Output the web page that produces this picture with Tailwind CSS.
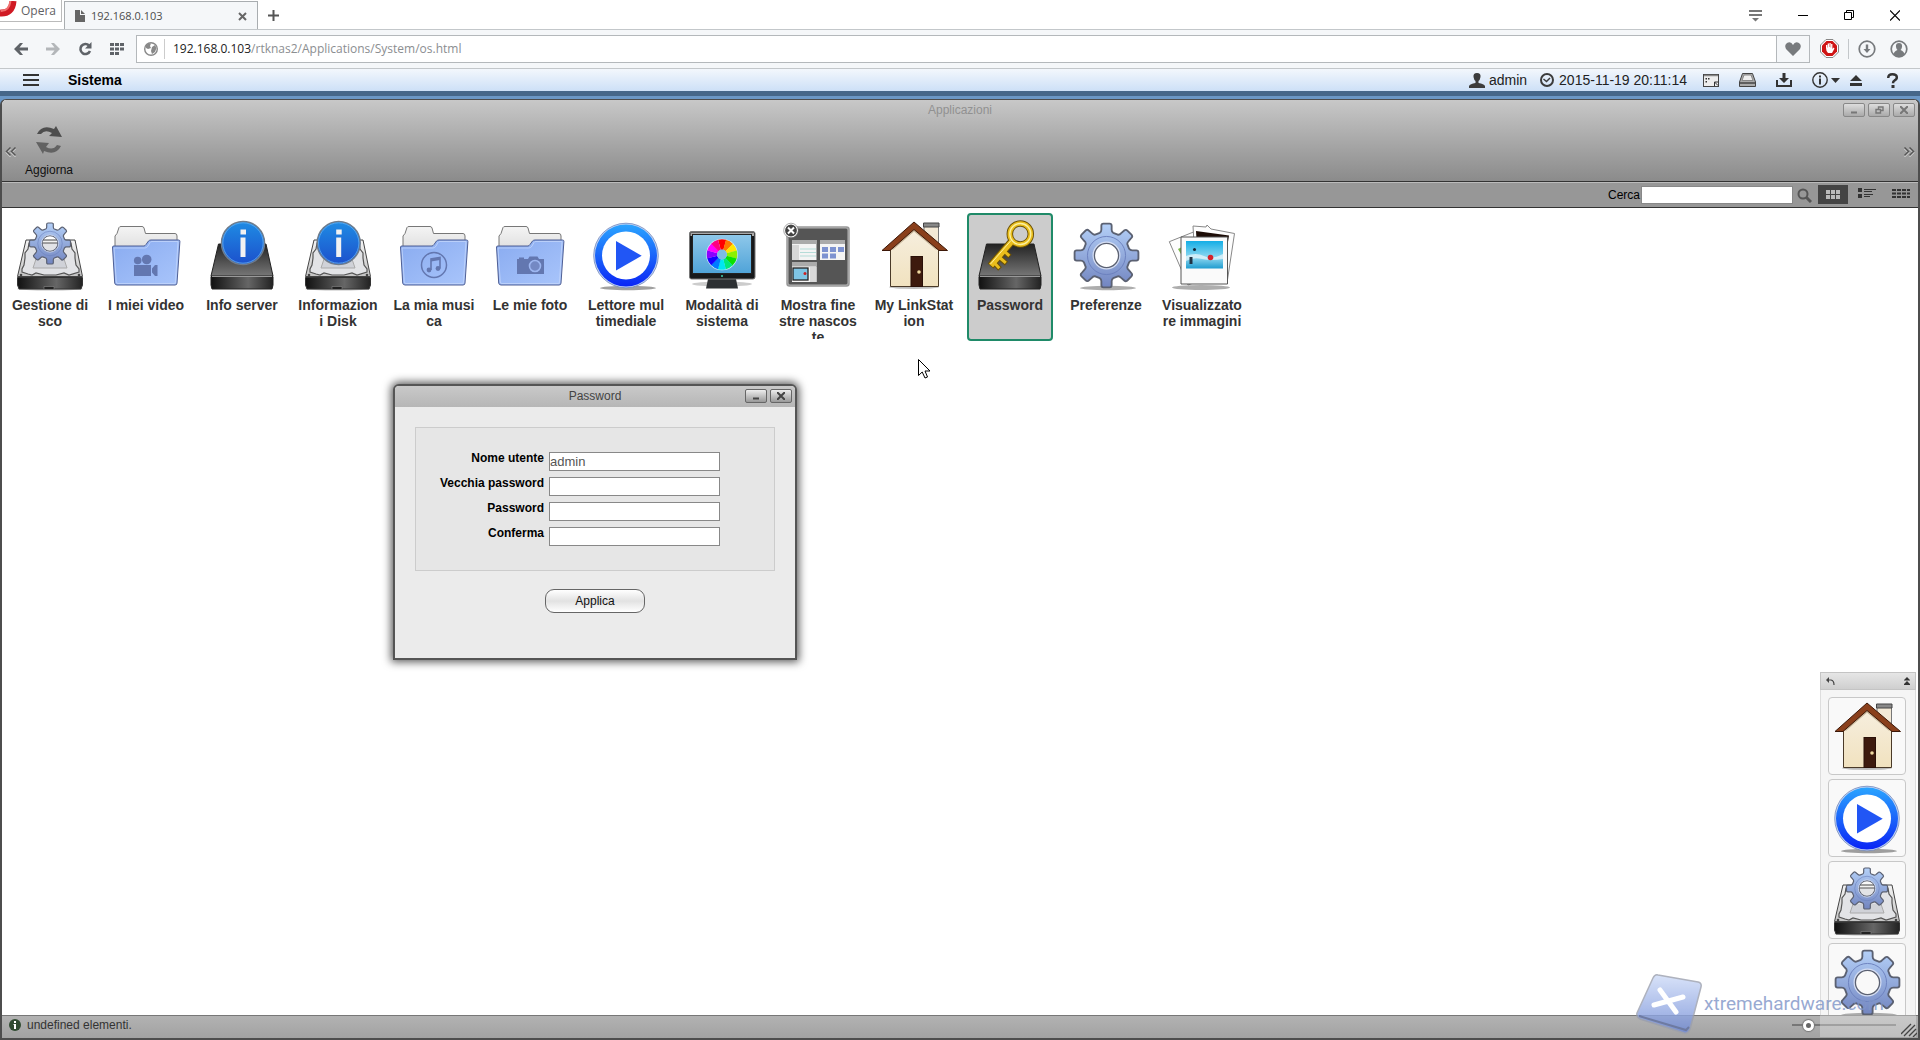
<!DOCTYPE html>
<html lang="it">

<head>
    <meta charset="UTF-8">
    <meta name="viewport" content="width=device-width, initial-scale=1.0">
    <title>192.168.0.103</title>
    <script src="https://cdn.jsdelivr.net/npm/@tailwindcss/browser@4"></script>
</head>

<body class="h-screen flex flex-col overflow-hidden bg-white text-black font-['Liberation_Sans',Arial,sans-serif]">

    <!-- Icon sprite (not display:none, the gradients have to stay alive) -->
    <svg class="absolute w-0 h-0" aria-hidden="true">
        <defs>
            <linearGradient id="gBlue" x1="0" y1="0" x2="0" y2="1"><stop offset="0" stop-color="#b4d0f8" /><stop offset="1" stop-color="#7285c0" /></linearGradient>
            <linearGradient id="gFolder" x1="0" y1="0" x2="1" y2="1"><stop offset="0" stop-color="#89abf0" /><stop offset="1" stop-color="#a9c5fb" /></linearGradient>
            <linearGradient id="gPaper" x1="0" y1="0" x2="0" y2="1"><stop offset="0" stop-color="#f4f4f4" /><stop offset="1" stop-color="#c4c4c4" /></linearGradient>
            <linearGradient id="gInfo" x1="0" y1="0" x2="0" y2="1"><stop offset="0" stop-color="#1f8ce4" /><stop offset="1" stop-color="#1c50cc" /></linearGradient>
            <linearGradient id="gRing" x1="0" y1="0" x2="0" y2="1"><stop offset="0" stop-color="#2aa4ff" /><stop offset="1" stop-color="#0a25f5" /></linearGradient>
            <linearGradient id="gFront" x1="0" y1="0" x2="1" y2="0"><stop offset="0" stop-color="#111" /><stop offset=".6" stop-color="#666" /><stop offset="1" stop-color="#222" /></linearGradient>
            <linearGradient id="gTop" x1="0" y1="0" x2="0" y2="1"><stop offset="0" stop-color="#222" /><stop offset="1" stop-color="#777" /></linearGradient>
            <linearGradient id="gScreen" x1="0" y1="0" x2="0" y2="1"><stop offset="0" stop-color="#8fc8ea" /><stop offset="1" stop-color="#4fa3d8" /></linearGradient>
            <linearGradient id="gWall" x1="0" y1="0" x2="0" y2="1"><stop offset="0" stop-color="#f7efe0" /><stop offset="1" stop-color="#f1e2bf" /></linearGradient>
            <linearGradient id="gSky" x1="0" y1="0" x2="0" y2="1"><stop offset="0" stop-color="#13aee6" /><stop offset=".6" stop-color="#8fd8f0" /><stop offset="1" stop-color="#1f9ccf" /></linearGradient>
            <linearGradient id="gMark" x1="0" y1="0" x2="0" y2="1"><stop offset="0" stop-color="#cfdcf8" /><stop offset="1" stop-color="#6f8ad6" /></linearGradient>
        </defs>

        <symbol id="gear" viewBox="-34 -34 68 68">
            <path fill="url(#gBlue)" fill-rule="evenodd" stroke="#5b6172" stroke-width="1.8" stroke-linejoin="round"
                d="M-6.5-22Q-5-23-5-25V-29Q-5-31-3-31H3Q5-31 5-29V-25Q5-23 6.500-22L11-20.200Q13-20 14-21.500L17.500-24.500Q19-25.500 20.500-24L24.500-20Q25.500-18.500 24.500-17.500L21.500-14Q20-12.500 20.200-11L22-6.500Q23-5 25-5H29Q31-5 31-3V3Q31 5 29 5H25Q23 5 22 6.500L20.200 11Q20 13 21.500 14L24.500 17.500Q25.500 19 24 20.500L20 24.500Q18.500 25.500 17.500 24.500L14 21.500Q12.500 20 11 20.200L6.500 22Q5 23 5 25V29Q5 31 3 31H-3Q-5 31-5 29V25Q-5 23-6.500 22L-11 20.200Q-13 20-14 21.500L-17.500 24.500Q-19 25.500-20.500 24L-24.500 20Q-25.500 18.500-24.500 17.500L-21.500 14Q-20 12.500-20.200 11L-22 6.500Q-23 5-25 5H-29Q-31 5-31 3V-3Q-31-5-29-5H-25Q-23-5-22-6.500L-20.200-11Q-20-13-21.500-14L-24.500-17.500Q-25.500-19-24-20.500L-20-24.500Q-18.500-25.500-17.500-24.500L-14-21.500Q-12.500-20-11-20.200ZM0-12A12 12 0 1 0 0 12A12 12 0 1 0 0-12Z" />
            <circle r="18.500" fill="none" stroke="#6b80bd" stroke-width=".9" />
            <circle r="13" fill="none" stroke="#d5def3" stroke-width="1.200" />
        </symbol>
        <symbol id="hdd" viewBox="0 0 72 72">
            <ellipse cx="36" cy="70" rx="33" ry="1.500" fill="#000" opacity=".25" />
            <path d="M12 21H61L68.500 57.500H3.500Z" fill="url(#gPaper)" stroke="#444" stroke-linejoin="round" />
            <path d="M15 24L14 30L11 34V39L10 46L8 50V53L14 55L18 56L22 54L30 56H42L50 54L55 56L65 53V50L62 46L61 39V34L58 30L57 24Z" fill="#e2e3e6" stroke="#555" stroke-width="1.200" />
            <path d="M22 40L19 49H53L50 40" fill="#d0d2d8" stroke="#aaa" />
            <circle cx="7" cy="56" r="1.300" fill="#444" /><circle cx="65" cy="56" r="1.300" fill="#444" />
            <path d="M3.500 58.500H68.500V66L67 70H5L3.500 66Z" fill="url(#gFront)" stroke="#333" />
            <path d="M30 70V67.500H40V70" fill="#222" stroke="#888" stroke-width=".6" />
        </symbol>
        <symbol id="box" viewBox="0 0 72 72">
            <path d="M12.500 25H60L67 57H5Z" fill="url(#gTop)" stroke="#222" stroke-linejoin="round" />
            <path d="M5 57.500H67V66L66 70H6L5 66Z" fill="url(#gFront)" stroke="#222" />
            <path d="M6 57.500H66" stroke="#999" />
        </symbol>
        <symbol id="info" viewBox="0 0 46 46">
            <circle cx="23" cy="23" r="21.500" fill="url(#gInfo)" stroke="#6f7c8c" stroke-width="1.500" />
            <circle cx="23" cy="23" r="20.200" fill="none" stroke="#63b0f2" stroke-width=".8" />
            <path d="M20.500 9.500H26V14.500H20.500ZM20.500 17.500H25.500V37H20.500Z" fill="#f2f2f2" />
        </symbol>
        <symbol id="folder" viewBox="0 0 72 72">
            <path d="M5 60V17L7 14.500L9 8.500Q9.500 7.500 11 7.500H32Q33.500 7.500 34 9L35.500 14.500H65Q67 14.500 67 17V30H5Z" fill="url(#gPaper)" stroke="#777" />
            <path d="M2.500 28Q2.500 27 4 27H34Q35 27 36 25.500L38.500 22Q39.500 21 41 21H68.500Q70 21 69.900 22.500L67 64Q67 66 65 66H7Q5 66 4.700 64Z" fill="url(#gFolder)" stroke="#4f5f94" />
            <path d="M4 29H35Q37 29 38 27L40 23.500Q40.500 22.500 42 22.500H68L65.500 63Q65.500 64.500 64 64.500H8Q6.500 64.500 6.300 63Z" fill="none" stroke="#c3d5fb" stroke-width=".8" />
        </symbol>

        <symbol id="app-disk" viewBox="0 0 72 72"><use href="#hdd" width="72" height="72" /><use href="#gear" x="13.500" y="2" width="45" height="45" /></symbol>
        <symbol id="app-video" viewBox="0 0 72 72">
            <use href="#folder" width="72" height="72" />
            <g fill="#6377b0"><circle cx="27.700" cy="41.500" r="3.800" /><circle cx="36.700" cy="40.500" r="4.800" /><path d="M24 46H41V57H24ZM42 49.500L45 46H47.500V57H45L42 53.500Z" /></g>
        </symbol>
        <symbol id="app-server" viewBox="0 0 72 72"><use href="#box" width="72" height="72" /><use href="#info" x="14" y="1" width="46" height="46" /></symbol>
        <symbol id="app-diskinfo" viewBox="0 0 72 72"><use href="#hdd" width="72" height="72" /><use href="#info" x="13.700" y="1" width="46" height="46" /></symbol>
        <symbol id="app-music" viewBox="0 0 72 72">
            <use href="#folder" width="72" height="72" />
            <circle cx="36" cy="46" r="12.500" fill="none" stroke="#6377b0" stroke-width="1.500" />
            <path d="M33 51V40L42 38.500V49.500" fill="none" stroke="#6377b0" stroke-width="1.600" /><path d="M33 40L42 38.500V41L33 42.500Z" fill="#6377b0" />
            <circle cx="31" cy="51" r="2.400" fill="#6377b0" /><circle cx="40" cy="49.500" r="2.400" fill="#6377b0" />
        </symbol>
        <symbol id="app-photo" viewBox="0 0 72 72">
            <use href="#folder" width="72" height="72" />
            <path d="M23 40H25V38.500H30V40H34L35.500 37.500H43.500L45 40H50V55H23Z" fill="#6377b0" />
            <circle cx="41" cy="47" r="5.500" fill="#7489c4" stroke="#9db6f0" stroke-width="1.600" />
        </symbol>
        <symbol id="app-play" viewBox="0 0 72 72">
            <ellipse cx="38" cy="69" rx="28" ry="2.200" fill="#777" opacity=".7" />
            <circle cx="36" cy="36.500" r="32.500" fill="#c4d4f4" /><circle cx="36" cy="36.500" r="32.300" fill="none" stroke="#6880b4" stroke-width=".7" />
            <circle cx="36" cy="36.500" r="31" fill="url(#gRing)" /><circle cx="36" cy="36.500" r="24" fill="#fff" />
            <path d="M26 22L51.700 36.700L26 51.500Z" fill="#2156f5" />
        </symbol>
        <symbol id="app-monitor" viewBox="0 0 72 72">
            <ellipse cx="36" cy="65" rx="30" ry="2.500" fill="#000" opacity=".2" />
            <path d="M22 60H50L52 69.500H20Z" fill="#2d3033" />
            <rect x="3.500" y="12.500" width="65.500" height="47.500" rx="2" fill="#17191b" stroke="#777" />
            <path d="M4.500 13.500H68V17H4.500Z" fill="#aaa" />
            <rect x="6.500" y="15.500" width="59" height="39" fill="url(#gScreen)" stroke="#222" />
            <circle cx="36" cy="35.500" r="15.800" fill="#d8ecf8" />
            <g transform="rotate(-105 36 35.500)" fill="none" stroke-width="10.500">
                <circle cx="36" cy="35.500" r="10" pathLength="12" stroke-dasharray="1.040 11" stroke="#f00" />
                <circle cx="36" cy="35.500" r="10" pathLength="12" stroke-dasharray="1.040 11" stroke-dashoffset="-1" stroke="#ff7a00" />
                <circle cx="36" cy="35.500" r="10" pathLength="12" stroke-dasharray="1.040 11" stroke-dashoffset="-2" stroke="#ffe600" />
                <circle cx="36" cy="35.500" r="10" pathLength="12" stroke-dasharray="1.040 11" stroke-dashoffset="-3" stroke="#8cf000" />
                <circle cx="36" cy="35.500" r="10" pathLength="12" stroke-dasharray="1.040 11" stroke-dashoffset="-4" stroke="#0be000" />
                <circle cx="36" cy="35.500" r="10" pathLength="12" stroke-dasharray="1.040 11" stroke-dashoffset="-5" stroke="#00e87a" />
                <circle cx="36" cy="35.500" r="10" pathLength="12" stroke-dasharray="1.040 11" stroke-dashoffset="-6" stroke="#00e6f0" />
                <circle cx="36" cy="35.500" r="10" pathLength="12" stroke-dasharray="1.040 11" stroke-dashoffset="-7" stroke="#007cff" />
                <circle cx="36" cy="35.500" r="10" pathLength="12" stroke-dasharray="1.040 11" stroke-dashoffset="-8" stroke="#1500ff" />
                <circle cx="36" cy="35.500" r="10" pathLength="12" stroke-dasharray="1.040 11" stroke-dashoffset="-9" stroke="#8a00ff" />
                <circle cx="36" cy="35.500" r="10" pathLength="12" stroke-dasharray="1.040 11" stroke-dashoffset="-10" stroke="#f0f" />
                <circle cx="36" cy="35.500" r="10" pathLength="12" stroke-dasharray="1 11" stroke-dashoffset="-11" stroke="#ff0080" />
            </g>
            <circle cx="36" cy="35.500" r="5" fill="#7cbce4" />
            <circle cx="36" cy="57" r="1" fill="#3fd0b0" />
        </symbol>
        <symbol id="app-windows" viewBox="0 0 72 72">
            <rect x="5" y="8" width="62" height="59" rx="2.500" fill="#555" stroke="#999" stroke-width="1.500" /><rect x="6" y="9" width="60" height="57" rx="2" fill="none" stroke="#ddd" stroke-width=".7" />
            <path d="M10 21H34.500V41H10ZM38 21H63V41H38ZM10 43H34.500V63H10Z" fill="#f4f4f4" />
            <path d="M10 21H34.500V25H10ZM38 21H63V25H38ZM10 43H34.500V47.500H10Z" fill="#aaa" />
            <path d="M10 26H17V41H10ZM28 48H34.500V63H28Z" fill="#d8d8d8" />
            <path d="M18 30H34M18 33.500H34M18 37H34" stroke="#b5dcd8" />
            <path d="M40 28H46V33H40ZM48 28H54V33H48ZM56 28H62V33H56ZM40 34.500H46V39.500H40ZM48 34.500H54V39.500H48Z" fill="#7d92d0" />
            <rect x="11" y="49" width="15" height="12" fill="#7fc4e4" stroke="#222" stroke-width="1.300" /><circle cx="23" cy="54.500" r="1.500" fill="#c22" />
            <circle cx="9" cy="11.500" r="6.500" fill="#444" stroke="#fff" stroke-width="1.200" /><circle cx="9" cy="11.500" r="7.300" fill="none" stroke="#777" stroke-width=".6" />
            <path d="M6 8.500L12 14.500M12 8.500L6 14.500" stroke="#fff" stroke-width="2" />
        </symbol>
        <symbol id="app-home" viewBox="0 0 72 72">
            <ellipse cx="36" cy="68" rx="25" ry="2" fill="#000" opacity=".25" />
            <path d="M46 5H60.500V26L46 14Z" fill="#f3e9d6" stroke="#777" /><path d="M45.500 4H61V8H45.500Z" fill="#888" stroke="#444" />
            <path d="M12.500 27L36 7L60.500 27V67.500H12.500Z" fill="url(#gWall)" stroke="#4a3a28" />
            <path d="M14 30L36 11L59 30" fill="none" stroke="#c9b79b" stroke-width="2.500" />
            <path d="M36 3L69.500 31.500H61L36 10.500L12 31.500H4Z" fill="#8a3f1b" stroke="#3d1808" stroke-linejoin="round" />
            <rect x="33" y="37.500" width="11.500" height="30" fill="#3d1a0e" stroke="#2a1008" /><circle cx="41" cy="53" r="1.800" fill="#f0d9a0" />
        </symbol>
        <symbol id="app-key" viewBox="0 0 72 72">
            <use href="#box" width="72" height="72" />
            <g fill="none" stroke="#6b5106"><circle cx="46.300" cy="15" r="10.500" stroke-width="6.500" /><path d="M39 21L16.500 47" stroke-width="7.500" /><path d="M31 33L36 37.500M26 39L32.500 44.500M20.500 44L26 50" stroke-width="5" /></g>
            <g fill="none" stroke="#e9bd1c"><circle cx="46.300" cy="15" r="10.500" stroke-width="4.600" /><path d="M39.500 20.500L17 46.500" stroke-width="5.500" /><path d="M30 32L35.300 36.800M25 38L31.800 43.800M20 43.500L25.300 49.300" stroke-width="3" /></g>
            <g fill="none" stroke="#fbf0a0"><circle cx="46.300" cy="15" r="10.500" stroke-width="1.300" /><path d="M37 21.500L16.500 45" /></g>
        </symbol>
        <symbol id="app-gear" viewBox="0 0 72 72"><ellipse cx="38" cy="69" rx="28" ry="2.200" fill="#777" opacity=".6" /><use href="#gear" x="1.500" y="1.500" width="70" height="70" /></symbol>
        <symbol id="app-images" viewBox="0 0 72 72">
            <ellipse cx="35" cy="68.500" rx="29" ry="2.500" fill="#777" opacity=".6" />
            <path d="M3.300 22.700L30 12L38 60L22 66Z" fill="#fdfdfd" stroke="#888" /><path d="M12 30L16 28L19 42Z" fill="#7ab648" />
            <path d="M27 7L40 8L41 6L45 10L68.500 14.500L61 64L30 60Z" fill="#fdfdfd" stroke="#888" /><path d="M30 12L63 16.500L58 48L32 44Z" fill="#1c0c06" /><path d="M61 22L58 42" stroke="#b5401a" stroke-width="2" />
            <path d="M15 18H61.500V65H15Z" fill="#fafafa" stroke="#555" stroke-linejoin="round" />
            <rect x="20" y="22" width="37" height="27.500" fill="url(#gSky)" />
            <path d="M20 37Q30 33 38 37T57 35V40Q45 42 36 40T20 42Z" fill="#fff" opacity=".6" />
            <circle cx="28.500" cy="30.500" r="1.500" fill="#123" /><circle cx="44.500" cy="38.500" r="2.800" fill="#d4222a" /><path d="M25 38V45" stroke="#234" stroke-width="3" />
        </symbol>
    </svg>

    <!-- Browser tabs -->
    <div class="h-[29px] shrink-0 flex items-start font-['Open_Sans',sans-serif] text-[#5f6164]">
        <button class="w-[62px] h-[22px] flex items-center gap-1 border-r border-b border-[#bbb] text-xs overflow-hidden pt-px">
            <svg class="self-start" width="17" height="18" viewBox="0 0 17 18"><path d="M0 12Q12 13 13 0" fill="none" stroke="#d01a24" stroke-width="7" /><path d="M1 10Q9 10 10.500 0" fill="none" stroke="#f07070" stroke-width="2" /></svg>
            Opera
        </button>
        <div class="w-[194px] h-[29px] ml-[2px] mt-px pl-2.5 pr-2.5 flex items-center border border-b-0 border-[#a9adb0] bg-[#f5f7f9] text-[11px] text-[#4c4c4c]">
            <svg width="10" height="12" viewBox="0 0 10 12"><path d="M0 0H5V5H10V12H0ZM6 0L10 4H6Z" fill="#666" /></svg>
            <span class="ml-1.5 flex-1">192.168.0.103</span>
            <button aria-label="Chiudi scheda"><svg width="9" height="9" viewBox="0 0 9 9"><path d="M1 1L8 8M8 1L1 8" stroke="#666" stroke-width="2" /></svg></button>
        </div>
        <button class="ml-2.5 mt-2.5" aria-label="Nuova scheda"><svg width="11" height="11" viewBox="0 0 11 11"><path d="M5.500 0V11M0 5.500H11" stroke="#555" stroke-width="2" /></svg></button>
        <div class="ml-auto mr-5 mt-2 flex gap-9 text-black">
            <button aria-label="Menu schede"><svg width="13" height="14" viewBox="0 0 13 14" fill="#777"><path d="M0 2H13V4H0ZM0 6H13V8H0ZM3 10H10L6.500 13.500Z" /></svg></button>
            <button aria-label="Riduci"><svg width="10" height="13" viewBox="0 0 10 13"><path d="M0 6.500H10" stroke="#000" /></svg></button>
            <button aria-label="Ripristina"><svg width="10" height="13" viewBox="0 0 10 13" fill="none" stroke="#000"><path d="M.5 3.500H7.500V10.500H.5ZM2.500 3.500V1.500H9.500V8.500H7.500" /></svg></button>
            <button aria-label="Chiudi"><svg width="10" height="13" viewBox="0 0 10 13"><path d="M0 1.500L10 11.500M10 1.500L0 11.500" stroke="#000" stroke-width="1.200" /></svg></button>
        </div>
    </div>

    <!-- Address bar -->
    <div class="h-10 shrink-0 flex items-center bg-[#f5f7f9] border-t border-b border-[#c3c7ca] pl-3.5 pr-3 pb-px font-['Open_Sans',sans-serif]">
        <div class="flex items-center gap-[18px]">
            <button aria-label="Indietro"><svg width="14" height="12" viewBox="0 0 14 12"><path d="M0 6L6 0H9L5.500 4.500H14V7.500H5.500L9 12H6Z" fill="#5f6368" /></svg></button>
            <button aria-label="Avanti"><svg width="14" height="12" viewBox="0 0 14 12"><path d="M14 6L8 0H5L8.500 4.500H0V7.500H8.500L5 12H8Z" fill="#b3b6b9" /></svg></button>
            <button aria-label="Ricarica"><svg width="14" height="14" viewBox="0 0 14 14"><path d="M11 3.500A5 5 0 1 0 12 9" fill="none" stroke="#5f6368" stroke-width="2.600" /><path d="M13.500 0V6.500H7Z" fill="#5f6368" /></svg></button>
            <button aria-label="Accesso rapido"><svg width="15" height="12" viewBox="0 0 15 12" fill="#5f6368"><path d="M0 0H4V3H0ZM5 0H9V3H5ZM10 0H14V3H10ZM0 4.500H4V7.500H0ZM5 4.500H9V7.500H5ZM10 4.500H14V7.500H10ZM0 9H4V12H0ZM5 9H9V12H5Z" /></svg></button>
        </div>
        <div class="ml-[11px] h-7 flex-1 flex items-center border border-[#b4b8bb] bg-white pl-[7px]">
            <svg width="14" height="14" viewBox="0 0 14 14"><circle cx="7" cy="7" r="6.300" fill="#fff" stroke="#888" stroke-width="1.400" /><path d="M2 3Q4 1 7 1.500L6 4L7 6L4 7L2 6ZM8 5L11 3L12.500 6L11 10L8 12L7 9Z" fill="#888" /></svg>
            <span class="ml-1.5 mr-2 h-5 w-px bg-[#ccc]"></span>
            <span class="text-xs text-[#8b8e91] flex-1"><span class="text-[#222]">192.168.0.103</span>/rtknas2/Applications/System/os.html</span>
            <button class="w-[33px] h-[26px] flex items-center justify-center border-l border-[#b4b8bb] bg-[#f5f7f9]" aria-label="Preferiti"><svg width="16" height="14" viewBox="0 0 16 14"><path d="M8 14L1 7Q-1 3 2 1Q6-1 8 3Q10-1 14 1Q17 3 15 7Z" fill="#777a7d" /></svg></button>
        </div>
        <div class="ml-2.5 flex items-center">
            <button aria-label="Blocco pubblicità"><svg width="19" height="19" viewBox="0 0 19 19"><path d="M6 .5H13L18.500 6V13L13 18.500H6L.5 13V6Z" fill="#fff" stroke="#888" /><path d="M6.500 2H12.500L17 6.500V12.500L12.500 17H6.500L2 12.500V6.500Z" fill="#cf1414" /><path d="M6 9V6H7.300V8.500H7.700V4.500H9V8H9.400V4H10.700V8.500H11.100V5H12.400V10L13.500 8.500L14.500 9.500L12 14H8Q6 12 6 9Z" fill="#fff" /></svg></button>
            <span class="mx-[9px] w-px h-5 bg-[#c3c7ca]"></span>
            <button aria-label="Download"><svg width="18" height="18" viewBox="0 0 18 18"><circle cx="9" cy="9" r="7.800" fill="none" stroke="#777a7d" stroke-width="1.700" /><path d="M7.800 4.500H10.200V9H12.500L9 13L5.500 9H7.800Z" fill="#777a7d" /></svg></button>
            <button class="ml-3.5" aria-label="Profilo"><svg width="18" height="18" viewBox="0 0 18 18"><circle cx="9" cy="9" r="7.800" fill="none" stroke="#777a7d" stroke-width="1.700" /><path d="M9 3Q12.500 3 12 7Q11.500 9.500 10.500 10Q14 11 14.500 14.500Q9 18.500 3.500 14.500Q4 11 7.500 10Q6.500 9.500 6 7Q5.500 3 9 3Z" fill="#777a7d" /></svg></button>
        </div>
    </div>

    <!-- System bar -->
    <header class="h-[22px] shrink-0 flex items-center bg-gradient-to-b from-[#f3f7fc] to-[#cde0f7] pl-[23px] pr-[22px] text-sm text-[#222]">
        <button aria-label="Menu"><svg width="16" height="12" viewBox="0 0 16 12"><path d="M0 1H16M0 6H16M0 11H16" stroke="#333" stroke-width="2" /></svg></button>
        <span class="ml-[29px] font-bold text-black">Sistema</span>
        <div class="ml-auto flex items-center">
            <svg width="16" height="15" viewBox="0 0 16 15"><path d="M8 0Q12 0 11.500 4Q11 7 9.500 8V10Q15 11 16 13V15H0V13Q1 11 6.500 10V8Q5 7 4.500 4Q4 0 8 0Z" fill="#3c3c3c" /></svg>
            <span class="ml-1">admin</span>
            <svg class="ml-[13px]" width="14" height="14" viewBox="0 0 14 14"><circle cx="7" cy="7" r="6" fill="none" stroke="#3c3c3c" stroke-width="2" /><path d="M3.500 6L6.500 8.500L10 5" fill="none" stroke="#3c3c3c" stroke-width="1.500" /></svg>
            <span class="ml-[5px]">2015-11-19 20:11:14</span>
            <button class="ml-4" aria-label="Finestre"><svg width="16" height="13" viewBox="0 0 16 13"><rect x=".5" y=".5" width="15" height="12" fill="#eee" stroke="#444" /><path d="M1 1.500H15" stroke="#888" stroke-width="1.500" /><path d="M2.500 4H4V5.500H2.500ZM5 4H6.500V5.500H5ZM2.500 7H4V8.500H2.500Z" fill="#333" /><path d="M11.500 12V8H15.500M11.500 8L15 11.500" stroke="#333" fill="none" /></svg></button>
            <button class="ml-5" aria-label="Disco"><svg width="17" height="14" viewBox="0 0 17 14"><path d="M3.500.5H13.500L16.500 9V13.500H.5V9Z" fill="#aaa" stroke="#444" /><path d="M5 2H12L14 7.500H3Z" fill="#eee" stroke="#888" /><path d="M1 10H16" stroke="#444" stroke-width="1.500" /></svg></button>
            <button class="ml-5" aria-label="Scarica"><svg width="16" height="14" viewBox="0 0 16 14"><path d="M1 7V13H15V7" fill="none" stroke="#333" stroke-width="2" /><path d="M6.500 0H9.500V5H13L8 10L3 5H6.500Z" fill="#333" /></svg></button>
            <button class="ml-5 flex items-center gap-[3px]" aria-label="Informazioni"><svg width="16" height="16" viewBox="0 0 16 16"><circle cx="8" cy="8" r="7.200" fill="none" stroke="#333" stroke-width="1.400" /><path d="M7 3.500H9V5.500H7ZM7 6.500H9V12.500H7Z" fill="#333" /></svg><svg width="9" height="5" viewBox="0 0 9 5"><path d="M0 0H9L4.500 5Z" fill="#333" /></svg></button>
            <button class="ml-2.5" aria-label="Espelli"><svg width="12" height="11" viewBox="0 0 12 11"><path d="M6 0L12 6H0ZM0 8H12V11H0Z" fill="#333" /></svg></button>
            <button class="ml-[25px]" aria-label="Aiuto"><svg width="11" height="15" viewBox="0 0 11 15"><path d="M1.300 5Q1 1.300 5.500 1.300Q9.800 1.300 9.800 4.500Q9.800 6.500 7.500 7.500Q6 8.300 6 10.300" fill="none" stroke="#333" stroke-width="2.500" /><path d="M4.500 12H7.500V15H4.500Z" fill="#333" /></svg></button>
        </div>
    </header>

    <!-- Desktop -->
    <div class="relative flex-1 min-h-0 flex flex-col border-t-[5px] border-[#466789] bg-[#6b97c5] pt-[3px]">

        <!-- Applicazioni window -->
        <main class="flex-1 min-h-0 flex flex-col border-2 border-t border-[#4d4d4d] rounded-t-md overflow-hidden bg-white">
            <div class="h-[82px] shrink-0 flex flex-col bg-gradient-to-b from-[#c8c8c8] to-[#8b8b8b] border-b border-[#333]">
                <div class="h-5 flex items-center">
                    <span class="w-[78px]"></span>
                    <h1 class="flex-1 text-center text-xs text-[#919191]">Applicazioni</h1>
                    <div class="w-[78px] pr-[3px] flex justify-end gap-[3px]">
                        <button class="w-[22px] h-3.5 flex items-center justify-center border border-[#888] rounded-[2px] bg-gradient-to-b from-[#ddd] to-[#aaa]" aria-label="Riduci finestra"><svg width="8" height="8" viewBox="0 0 8 8"><path d="M1 6.500H7" stroke="#777" stroke-width="2" /></svg></button>
                        <button class="w-[22px] h-3.5 flex items-center justify-center border border-[#888] rounded-[2px] bg-gradient-to-b from-[#ddd] to-[#aaa]" aria-label="Ripristina finestra"><svg width="9" height="8" viewBox="0 0 9 8"><path d="M3.500 3V1H8V4.500H6M1 3.500H5.500V7H1Z" fill="none" stroke="#777" stroke-width="1.400" /></svg></button>
                        <button class="w-[22px] h-3.5 flex items-center justify-center border border-[#888] rounded-[2px] bg-gradient-to-b from-[#ddd] to-[#aaa]" aria-label="Chiudi finestra"><svg width="8" height="8" viewBox="0 0 8 8"><path d="M0 0L8 8M8 0L0 8" stroke="#777" stroke-width="2" /></svg></button>
                    </div>
                </div>
                <div class="flex-1 flex items-center justify-between px-[3px] pt-0.5">
                    <button aria-label="Scorri indietro"><svg width="12" height="10" viewBox="0 0 12 10"><path d="M5.500 1.500L1.500 5.500L5.500 9.500M10.500 1.500L6.500 5.500L10.500 9.500" fill="none" stroke="#ddd" stroke-width="1.500" /><path d="M5.500 .5L1.500 4.500L5.500 8.500M10.500 .5L6.500 4.500L10.500 8.500" fill="none" stroke="#555" stroke-width="1.500" /></svg></button>
                    <button class="ml-2 mr-auto flex flex-col items-center gap-[7px] text-xs leading-4 text-[#111]">
                        <svg width="28" height="30" viewBox="0 0 28 30"><path d="M2 9Q7-1 19 4L21 1L27 12L14 11L17 8Q10 4 6 9Z" fill="#4e4e4e" /><path d="M26 21Q21 31 9 26L8 29L1 17L14 18L11 22Q18 26 22 20Z" fill="#626262" /></svg>
                        Aggiorna
                    </button>
                    <button aria-label="Scorri avanti"><svg width="12" height="10" viewBox="0 0 12 10"><path d="M1.500 1.500L5.500 5.500L1.500 9.500M6.500 1.500L10.500 5.500L6.500 9.500" fill="none" stroke="#ddd" stroke-width="1.500" /><path d="M1.500 .5L5.500 4.500L1.500 8.500M6.500 .5L10.500 4.500L6.500 8.500" fill="none" stroke="#555" stroke-width="1.500" /></svg></button>
                </div>
            </div>

            <div class="h-[26px] shrink-0 flex items-center justify-end border-t border-t-[#bbb] border-b border-b-[#333] bg-[#979797] pr-2 text-xs">
                <label for="cerca">Cerca</label>
                <input id="cerca" type="text" class="ml-px w-[152px] h-[18px] bg-white border border-[#888] outline-none">
                <button class="ml-1" aria-label="Cerca"><svg width="15" height="15" viewBox="0 0 15 15"><circle cx="6" cy="6" r="4.500" fill="none" stroke="#555" stroke-width="2" /><path d="M9.500 9.500L14 14" stroke="#555" stroke-width="3" /></svg></button>
                <button class="ml-1.5 mb-0.5 w-[30px] h-[19px] flex items-center justify-center bg-[#444]" aria-label="Vista icone"><svg width="14" height="9" viewBox="0 0 14 9" fill="#bbb"><path d="M0 0H4V4H0ZM5 0H9V4H5ZM10 0H14V4H10ZM0 5H4V9H0ZM5 5H9V9H5ZM10 5H14V9H10Z" /></svg></button>
                <button class="ml-2.5 mb-1" aria-label="Vista elenco"><svg width="18" height="10" viewBox="0 0 18 10"><path d="M0 0H4V4H0ZM0 6H4V10H0ZM6 1H18V2H6ZM6 3H14V4H6ZM6 6H15V7H6ZM6 8H12V9H6Z" fill="#333" /></svg></button>
                <button class="ml-4 mb-1" aria-label="Vista dettagli"><svg width="18" height="9" viewBox="0 0 18 9"><path d="M0 1H4M5 1H9M10 1H14M15 1H18M0 4.500H4M5 4.500H9M10 4.500H14M15 4.500H18M0 8H4M5 8H9M10 8H14M15 8H18" stroke="#333" stroke-width="2" /></svg></button>
            </div>

            <!-- App icons -->
            <div class="flex-1 min-h-0 flex flex-wrap content-start gap-2.5 p-[5px] text-sm leading-4 font-bold text-[#333] text-center">
                <button class="w-[86px] h-32 flex flex-col items-center gap-1.5 pt-1 border-2 border-transparent rounded overflow-hidden"><svg class="w-[72px] h-[72px] shrink-0"><use href="#app-disk" /></svg><span class="whitespace-nowrap">Gestione di<br>sco</span></button>
                <button class="w-[86px] h-32 flex flex-col items-center gap-1.5 pt-1 border-2 border-transparent rounded overflow-hidden"><svg class="w-[72px] h-[72px] shrink-0"><use href="#app-video" /></svg><span class="whitespace-nowrap">I miei video</span></button>
                <button class="w-[86px] h-32 flex flex-col items-center gap-1.5 pt-1 border-2 border-transparent rounded overflow-hidden"><svg class="w-[72px] h-[72px] shrink-0"><use href="#app-server" /></svg><span class="whitespace-nowrap">Info server</span></button>
                <button class="w-[86px] h-32 flex flex-col items-center gap-1.5 pt-1 border-2 border-transparent rounded overflow-hidden"><svg class="w-[72px] h-[72px] shrink-0"><use href="#app-diskinfo" /></svg><span class="whitespace-nowrap">Informazion<br>i Disk</span></button>
                <button class="w-[86px] h-32 flex flex-col items-center gap-1.5 pt-1 border-2 border-transparent rounded overflow-hidden"><svg class="w-[72px] h-[72px] shrink-0"><use href="#app-music" /></svg><span class="whitespace-nowrap">La mia musi<br>ca</span></button>
                <button class="w-[86px] h-32 flex flex-col items-center gap-1.5 pt-1 border-2 border-transparent rounded overflow-hidden"><svg class="w-[72px] h-[72px] shrink-0"><use href="#app-photo" /></svg><span class="whitespace-nowrap">Le mie foto</span></button>
                <button class="w-[86px] h-32 flex flex-col items-center gap-1.5 pt-1 border-2 border-transparent rounded overflow-hidden"><svg class="w-[72px] h-[72px] shrink-0"><use href="#app-play" /></svg><span class="whitespace-nowrap">Lettore mul<br>timediale</span></button>
                <button class="w-[86px] h-32 flex flex-col items-center gap-1.5 pt-1 border-2 border-transparent rounded overflow-hidden"><svg class="w-[72px] h-[72px] shrink-0"><use href="#app-monitor" /></svg><span class="whitespace-nowrap">Modalità di<br>sistema</span></button>
                <button class="w-[86px] h-32 flex flex-col items-center gap-1.5 pt-1 border-2 border-transparent rounded overflow-hidden"><svg class="w-[72px] h-[72px] shrink-0"><use href="#app-windows" /></svg><span class="whitespace-nowrap">Mostra fine<br>stre nascos<br>te</span></button>
                <button class="w-[86px] h-32 flex flex-col items-center gap-1.5 pt-1 border-2 border-transparent rounded overflow-hidden"><svg class="w-[72px] h-[72px] shrink-0"><use href="#app-home" /></svg><span class="whitespace-nowrap">My LinkStat<br>ion</span></button>
                <button class="w-[86px] h-32 flex flex-col items-center gap-1.5 pt-1 border-2 border-[#1f8a68] bg-[#ccc] rounded overflow-hidden"><svg class="w-[72px] h-[72px] shrink-0"><use href="#app-key" /></svg><span class="whitespace-nowrap">Password</span></button>
                <button class="w-[86px] h-32 flex flex-col items-center gap-1.5 pt-1 border-2 border-transparent rounded overflow-hidden"><svg class="w-[72px] h-[72px] shrink-0"><use href="#app-gear" /></svg><span class="whitespace-nowrap">Preferenze</span></button>
                <button class="w-[86px] h-32 flex flex-col items-center gap-1.5 pt-1 border-2 border-transparent rounded overflow-hidden"><svg class="w-[72px] h-[72px] shrink-0"><use href="#app-images" /></svg><span class="whitespace-nowrap">Visualizzato<br>re immagini</span></button>
            </div>

            <!-- Status bar -->
            <footer class="h-[23px] shrink-0 flex items-center gap-1.5 border-t border-[#777] bg-gradient-to-b from-[#b2b2b2] to-[#a2a2a2] pl-[7px] pr-[22px] pb-1 text-xs text-[#333]">
                <svg width="12" height="12" viewBox="0 0 12 12"><circle cx="6" cy="6" r="6" fill="#2f4a30" /><path d="M5 2H7V4H5ZM4.500 5H7V10H5V6H4.500Z" fill="#fff" /></svg>
                undefined elementi.
                <input type="range" min="0" max="100" value="12" aria-label="Dimensione icone"
                    class="ml-auto w-[104px] h-3 appearance-none bg-transparent [&::-webkit-slider-runnable-track]:h-[2px] [&::-webkit-slider-runnable-track]:bg-[#777] [&::-webkit-slider-thumb]:appearance-none [&::-webkit-slider-thumb]:size-[11px] [&::-webkit-slider-thumb]:-mt-[4px] [&::-webkit-slider-thumb]:rounded-full [&::-webkit-slider-thumb]:border-[3px] [&::-webkit-slider-thumb]:border-white [&::-webkit-slider-thumb]:bg-[#666] [&::-webkit-slider-thumb]:shadow-[0_0_1px_1px_#777]">
            </footer>
        </main>

        <!-- Password window -->
        <section class="absolute left-[393px] top-[288px] w-[404px] h-[276px] flex flex-col border-2 border-[#555] rounded-t-md bg-[#ebebeb] shadow-[0_0_9px_2px_rgba(0,0,0,0.65)] text-xs">
            <div class="h-[21px] shrink-0 flex items-center rounded-t bg-gradient-to-b from-[#c9c9c9] to-[#b6b6b6] pb-0.5">
                <span class="w-[52px]"></span>
                <h2 class="flex-1 text-center text-[#444]">Password</h2>
                <div class="w-[52px] pr-[3px] flex justify-end gap-[3px]">
                    <button class="w-[22px] h-3.5 flex items-center justify-center border border-[#666] rounded-[2px] bg-gradient-to-b from-[#eee] to-[#999]" aria-label="Riduci"><svg width="8" height="8" viewBox="0 0 8 8"><path d="M1 6.500H7" stroke="#444" stroke-width="2" /></svg></button>
                    <button class="w-[22px] h-3.5 flex items-center justify-center border border-[#666] rounded-[2px] bg-gradient-to-b from-[#eee] to-[#999]" aria-label="Chiudi"><svg width="8" height="8" viewBox="0 0 8 8"><path d="M0 0L8 8M8 0L0 8" stroke="#444" stroke-width="2" /></svg></button>
                </div>
            </div>
            <form class="flex flex-col items-center px-5 pt-5 gap-[18px]">
                <fieldset class="w-full h-36 border border-[#ccc] bg-[#e6e6e6] pt-[21px]">
                    <div class="grid grid-cols-[128px_171px] gap-x-[5px] auto-rows-[25px]">
                        <label for="utente" class="text-right font-bold leading-[18px]">Nome utente</label>
                        <input id="utente" type="text" value="admin" class="mt-[3px] h-[19px] border border-[#888] bg-white text-[13px] text-[#555] outline-none">
                        <label for="vecchia" class="text-right font-bold leading-[18px]">Vecchia password</label>
                        <input id="vecchia" type="password" class="mt-[3px] h-[19px] border border-[#888] bg-white outline-none">
                        <label for="nuova" class="text-right font-bold leading-[18px]">Password</label>
                        <input id="nuova" type="password" class="mt-[3px] h-[19px] border border-[#888] bg-white outline-none">
                        <label for="conferma" class="text-right font-bold leading-[18px]">Conferma</label>
                        <input id="conferma" type="password" class="mt-[3px] h-[19px] border border-[#888] bg-white outline-none">
                    </div>
                </fieldset>
                <button type="button" class="w-[100px] h-6 rounded-[9px] border border-[#666] bg-gradient-to-b from-white via-[#e2e2e2] to-white text-[#111]">Applica</button>
            </form>
        </section>

        <!-- Dock -->
        <aside class="absolute right-1 bottom-[3px] w-24 flex flex-col">
            <div class="h-[18px] flex items-center justify-between px-[5px] border border-[#c4c4c4] bg-gradient-to-b from-[#e6e6e6] to-[#cfcfcf]">
                <button aria-label="Sposta"><svg width="9" height="8" viewBox="0 0 9 8"><path d="M3 0V6L0 3Z" fill="#444" /><path d="M2 3H5Q8 3.500 8 8" fill="none" stroke="#444" stroke-width="1.200" /></svg></button>
                <button aria-label="Comprimi"><svg width="6" height="8" viewBox="0 0 6 8"><path d="M3 0L6 3H0ZM3 4L6 7H0ZM0 7H6V8H0ZM0 3H6V3.500H0Z" fill="#333" /></svg></button>
            </div>
            <div class="h-[325px] overflow-hidden flex flex-col items-center gap-1 pt-[7px] pr-[3px] border-l border-r border-[#ddd] bg-[#f5f5f5]">
                <button class="size-[78px] shrink-0 flex items-center justify-center border border-[#c8c8c8] rounded bg-[#f9f9f9]" aria-label="My LinkStation"><svg class="w-[72px] h-[72px]"><use href="#app-home" /></svg></button>
                <button class="size-[78px] shrink-0 flex items-center justify-center border border-[#c8c8c8] rounded bg-[#f9f9f9]" aria-label="Lettore multimediale"><svg class="w-[72px] h-[72px]"><use href="#app-play" /></svg></button>
                <button class="size-[78px] shrink-0 flex items-center justify-center border border-[#c8c8c8] rounded bg-[#f9f9f9]" aria-label="Gestione disco"><svg class="w-[72px] h-[72px]"><use href="#app-disk" /></svg></button>
                <button class="size-[78px] shrink-0 flex items-center justify-center border border-[#c8c8c8] rounded bg-[#f9f9f9]" aria-label="Preferenze"><svg class="w-[72px] h-[72px]"><use href="#app-gear" /></svg></button>
            </div>
            <div class="h-[22px] bg-white/30"></div>
        </aside>
        <svg class="absolute right-[3px] bottom-[3px]" width="16" height="14" viewBox="0 0 16 14"><path d="M0 11L10 1M3 13L14 2M8 13L15 6M12 14L16 10" stroke="#444" stroke-width="1.300" /></svg>

        <!-- Watermark -->
        <div class="absolute right-[36px] bottom-[5px] flex items-center gap-0.5 opacity-80 pointer-events-none">
            <svg width="66" height="62" viewBox="0 0 66 62">
                <path d="M22 2L62 9Q66 10 65 14L54 56Q52 61 48 60L4 46Q0 44 1 40L17 5Q19 1 22 2Z" fill="url(#gMark)" stroke="#9a9fae" stroke-width="1.500" />
                <path d="M3 43L50 57L53 54" fill="none" stroke="#5f6fa0" stroke-width="2" />
                <path d="M24 17L40 39M47 24L18 32" stroke="#fff" stroke-width="5" stroke-linecap="round" />
            </svg>
            <span class="font-['Roboto',sans-serif] text-[19px] leading-7 text-[#7f95c8]">xtremehardware.com</span>
        </div>

        <!-- Pointer -->
        <svg class="absolute left-[918px] top-[263px]" width="13" height="20" viewBox="0 0 13 20"><path d="M.5 .5V16.500L4.200 13L7 19L9.500 18L7 12H12Z" fill="#fff" stroke="#000" /></svg>
    </div>
</body>

</html>
